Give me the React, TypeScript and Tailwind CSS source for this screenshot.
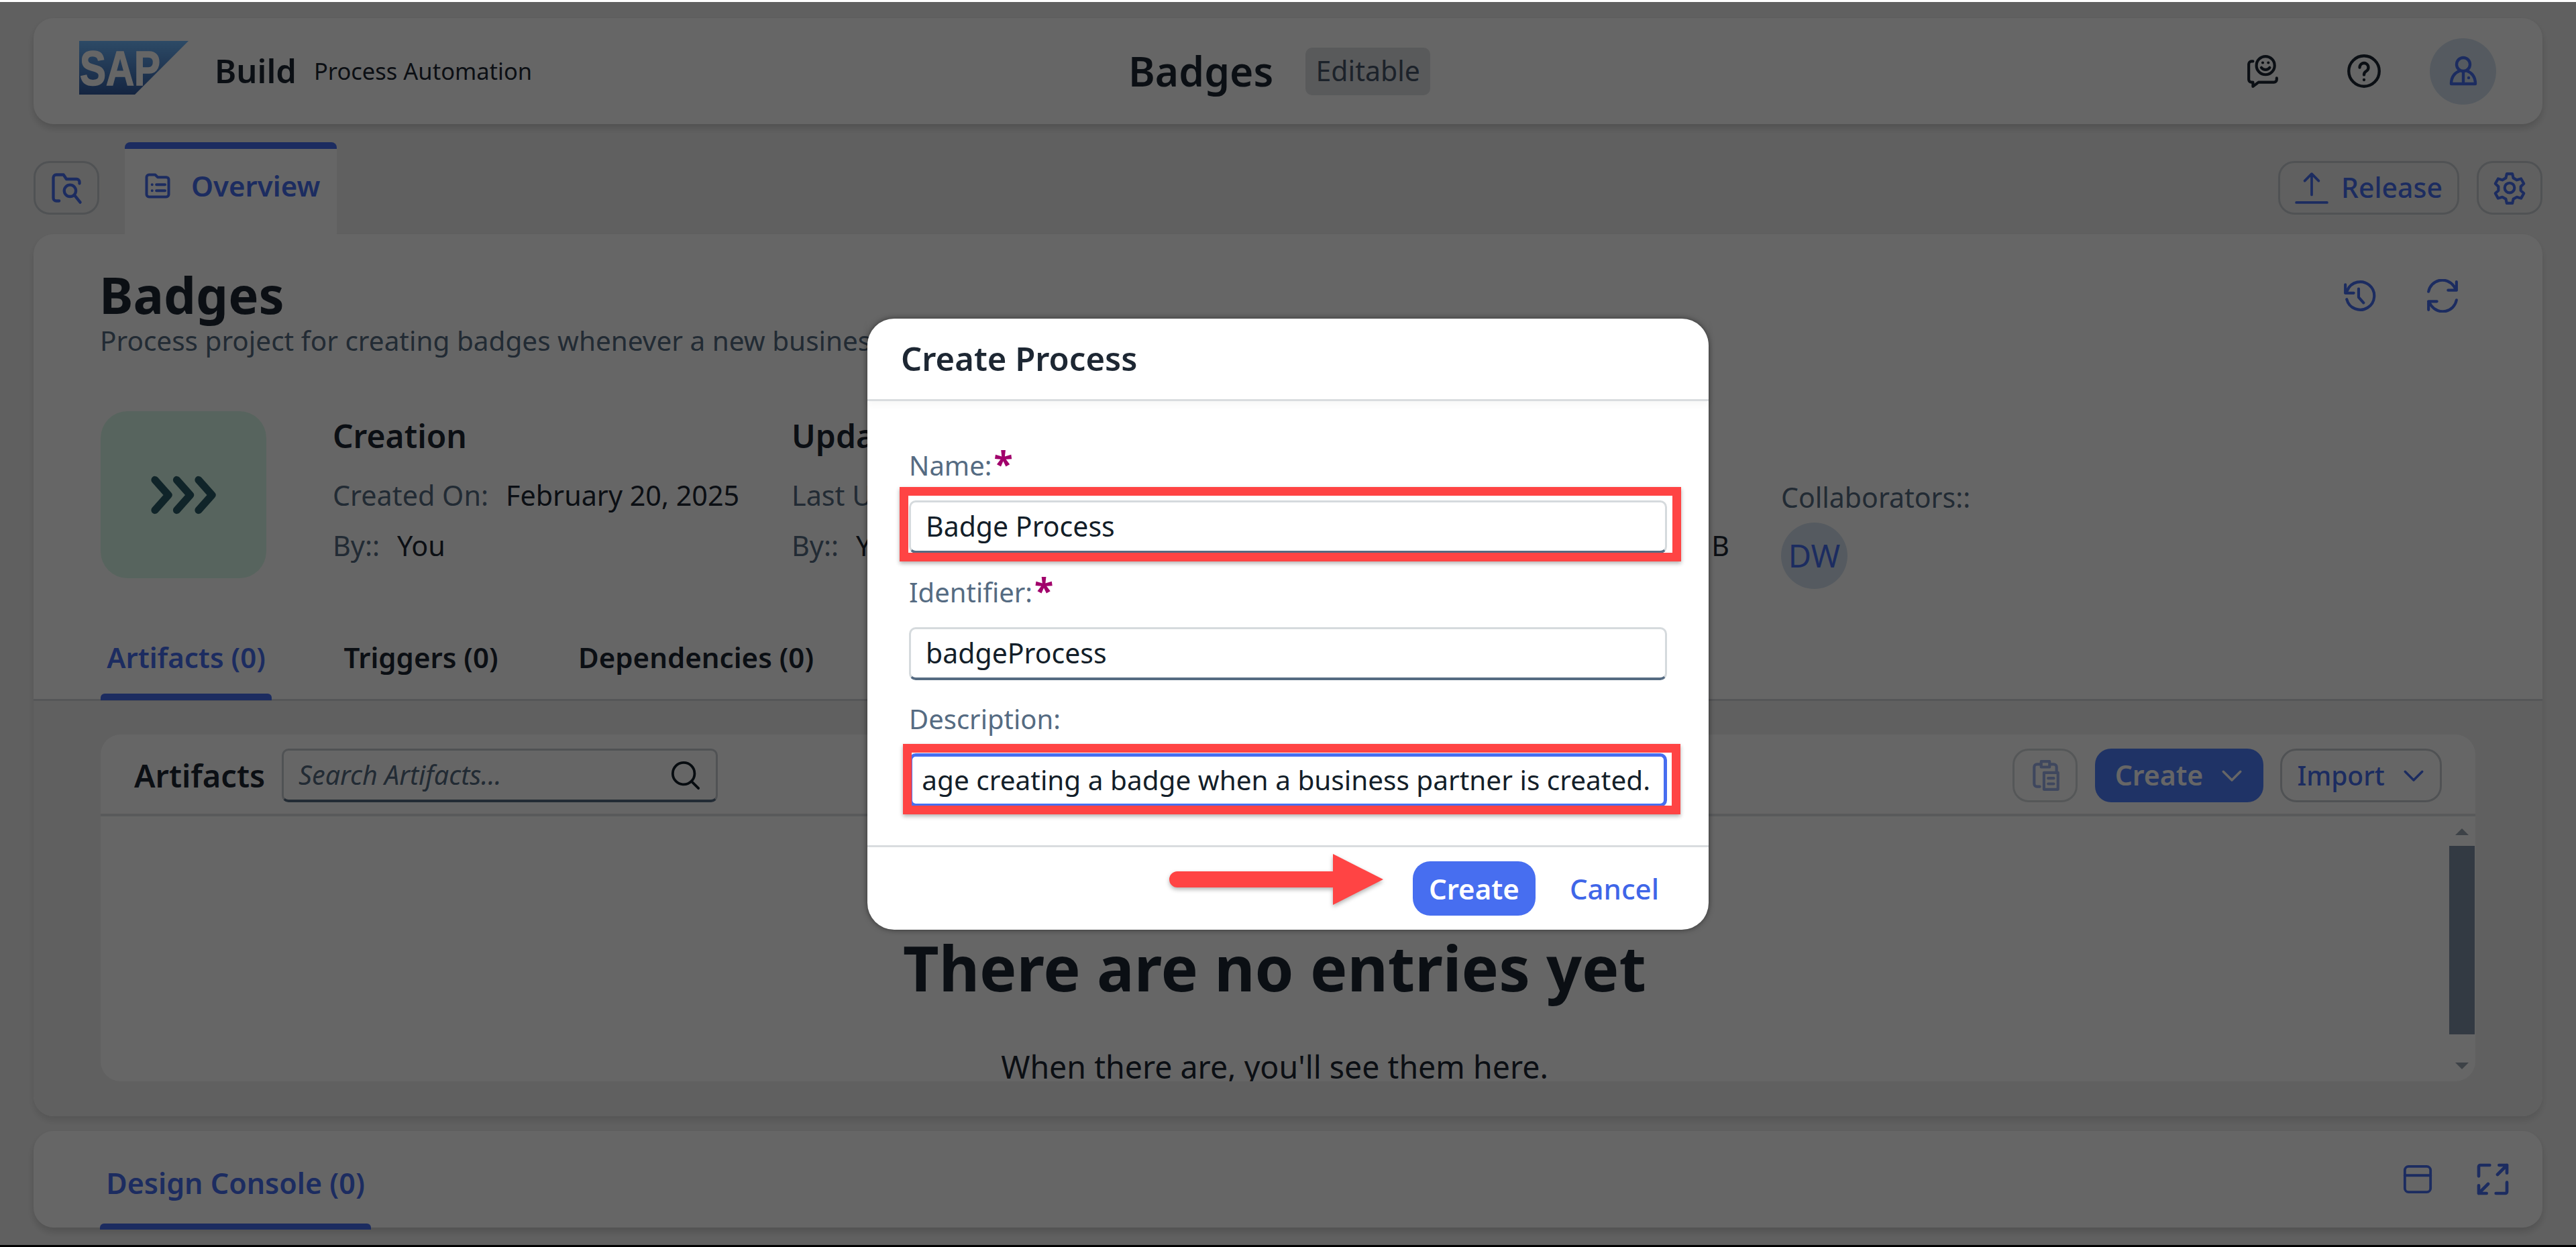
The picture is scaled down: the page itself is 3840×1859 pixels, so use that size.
import React from "react";

const Svg = ({ className, children, sw = 2, vb = "0 0 24 24" }: { className: string; children: React.ReactNode; sw?: number; vb?: string }) => (
  <svg viewBox={vb} fill="none" stroke="currentColor" strokeWidth={sw} strokeLinecap="round" strokeLinejoin="round" className={className}>
    {children}
  </svg>
);

const SapLogo = () => (
  <svg viewBox="0 0 163 80" className="w-[163px] h-[80px]">
    <defs>
      <linearGradient id="sapg" x1="0" y1="0" x2="0" y2="1">
        <stop offset="0" stopColor="#70b9ff" />
        <stop offset="1" stopColor="#345ca2" />
      </linearGradient>
    </defs>
    <polygon points="0,0 163,0 83,80 0,80" fill="url(#sapg)" />
    <text x="1" y="66" fontFamily="'Liberation Sans',sans-serif" fontWeight="700" fontSize="72" fill="#fff" stroke="#fff" strokeWidth="1.5" textLength="120" lengthAdjust="spacingAndGlyphs">SAP</text>
  </svg>
);

const Outline = ({ className, children }: { className: string; children: React.ReactNode }) => (
  <div className={`flex items-center justify-center rounded-[24px] border-[3px] border-[#c8cdd2] ${className}`}>{children}</div>
);

const Field = ({ label, req, children, mb }: { label: string; req?: boolean; children: React.ReactNode; mb: string }) => (
  <div className="flex flex-col">
    <div className={`flex h-[52px] items-center text-[40px] text-[#556b82] ${mb}`}>
      {label}
      {req && <span className="ml-[3px] -mt-[6px] text-[52px] font-bold leading-none text-[#a1006b]">*</span>}
    </div>
    {children}
  </div>
);

const inputCls = "relative flex h-[79px] w-[1130px] items-center rounded-[10px] border-[3px] border-b-[4px] border-[#d5dadd] border-b-[#556b82] bg-white pl-[22px] text-[41px] text-[#131e29]";

const RedBox = ({ className }: { className: string }) => (
  <div className={`absolute border-[13px] border-[#ff4444] shadow-[0_3px_6px_rgba(0,0,0,0.3)] ${className}`} />
);

const MetaRow = ({ label, value, className }: { label: string; value: string; className: string }) => (
  <div className={`flex h-[50px] items-center text-[41.300px] ${className}`}>
    <span className="text-[#556b82]">{label}</span>
    <span className="ml-[26px] text-[#1d2733]">{value}</span>
  </div>
);

export default function App() {
  return (
    <div className="flex h-[1859px] w-full flex-col overflow-hidden bg-white font-['Noto_Sans',sans-serif]">
      <div className="h-[3px] shrink-0 bg-white" />
      <div className="relative min-h-0 flex-1 bg-[#f1f1f1] px-[50px] pt-[24px] text-[#1d2733]">
        {/* Shell bar */}
        <header className="flex h-[158px] items-center rounded-[30px] bg-white pl-[68px] pr-[69px] shadow-[0_6px_12px_rgba(0,0,0,0.16)]">
          <div className="flex w-[1564px] items-center">
            <div className="-mt-[10px]"><SapLogo /></div>
            <span className="ml-[39px] text-[49px] font-semibold">Build</span>
            <span className="ml-[26px] text-[34.500px]">Process Automation</span>
          </div>
          <span className="text-[60.500px] font-semibold">Badges</span>
          <span className="ml-[48px] flex h-[71px] w-[186px] items-center justify-center rounded-[10px] bg-[#dfe1e3] text-[41px] text-[#475569]">Editable</span>
          <div className="flex-1" />
          <Svg className="h-[50px] w-[50px]" sw={2}>
            <path d="M5 5H4a2 2 0 0 0-2 2v11a2 2 0 0 0 2 2h1v3l4-3h11a2 2 0 0 0 2-2v-1" />
            <circle cx="14" cy="8" r="6.5" />
            <path d="M11 9.500c1.500 2 4.500 2 6 0M12 6h.01M16 6h.01" />
          </Svg>
          <Svg className="ml-[100px] h-[52px] w-[52px]" sw={2}>
            <circle cx="12" cy="12" r="10.500" />
            <path d="M9 9.500a3 3 0 1 1 4.500 2.600c-1 .6-1.500 1.200-1.500 2.400M12 18h.01" />
          </Svg>
          <div className="ml-[72px] flex h-[99px] w-[99px] items-center justify-center rounded-full bg-[#d4e2f0] text-[#476ef0]">
            <Svg className="h-[48px] w-[48px]" sw={2.2}>
              <circle cx="12" cy="7" r="5" />
              <path d="M9 12c-3 1-6 4-6 9.500h18c0-5.500-3-8.500-6-9.500M12 13v8.500M16 17h.01" />
            </Svg>
          </div>
        </header>

        {/* Toolbar row */}
        <div className="flex h-[164px] items-start pt-[27px]">
          <Outline className="mt-[28px] h-[80px] w-[98px] text-[#476ef0]">
            <Svg className="h-[52px] w-[56px]" sw={2}>
              <path d="M7 21H5a2 2 0 0 1-2-2V5a2 2 0 0 1 2-2h5l2 3h7a2 2 0 0 1 2 2v1" />
              <circle cx="14.500" cy="14" r="4" />
              <path d="M17.500 17l4 5" />
            </Svg>
          </Outline>
          <div className="ml-[38px] flex h-[137px] w-[316px] items-center rounded-t-[8px] border-t-[10px] border-[#476ef0] bg-white pb-[18px] pl-[25px] text-[#476ef0]">
            <Svg className="h-[44px] w-[48px]" sw={2.2}>
              <path d="M3 5a2 2 0 0 1 2-2h5l2 2h7a2 2 0 0 1 2 2v12a2 2 0 0 1-2 2H5a2 2 0 0 1-2-2zM7.500 11h.01M7.500 16h.01M11 11h7M11 16h7" />
            </Svg>
            <span className="ml-[26px] text-[42px] font-semibold">Overview</span>
          </div>
          <div className="flex-1" />
          <Outline className="mt-[28px] h-[80px] w-[270px] gap-[19px] text-[#476ef0]">
            <Svg className="h-[52px] w-[50px]" sw={1.8}>
              <path d="M12 17V2M7 7l5-5 5 5M1 22.500h22" />
            </Svg>
            <span className="text-[41px] font-medium">Release</span>
          </Outline>
          <Outline className="ml-[26px] mt-[28px] h-[80px] w-[98px] text-[#476ef0]">
            <Svg className="h-[50px] w-[50px]" sw={2}>
              <circle cx="12" cy="12" r="3.500" />
              <path d="M10 2h4l.7 3 2.500 1.400 3-.9 2 3.500-2.200 2.100v2.800l2.200 2.100-2 3.500-3-.9-2.500 1.400-.7 3h-4l-.7-3-2.500-1.400-3 .9-2-3.500 2.200-2.100v-2.800L1.800 9l2-3.500 3 .9L9.300 5z" />
            </Svg>
          </Outline>
        </div>

        {/* Project card */}
        <section className="flex h-[1315px] flex-col overflow-hidden rounded-[30px] bg-white shadow-[0_6px_12px_rgba(0,0,0,0.12)]">
          <div className="flex h-[696px] shrink-0 flex-col border-b-[3px] border-[#d5d8db] px-[100px] pt-[43px]">
            <div className="flex h-[142px] items-start">
              <div className="flex-1">
                <h1 className="-ml-[2px] text-[76px] font-bold leading-[94px]">Badges</h1>
                <p className="-ml-[1px] -mt-[3px] text-[40.500px] leading-[50px] text-[#556b82]">Process project for creating badges whenever a new business partner is created.</p>
              </div>
              <Svg className="mr-[74px] mt-[24px] h-[50px] w-[50px] text-[#476ef0]" sw={2}>
                <path d="M2 4v6h6M3 14.500A10 10 0 1 0 3.500 8L2 10M11.500 7v6l3.500 4" />
              </Svg>
              <Svg className="mr-[24px] mt-[24px] h-[50px] w-[50px] text-[#476ef0]" sw={2}>
                <path d="M2 9a10 10 0 0 1 18-4l2 3M22 2v6h-6M22 15a10 10 0 0 1-18 4l-2-3M2 22v-6h6" />
              </Svg>
            </div>
            <div className="mt-[79px] flex items-start">
              <div className="flex h-[249px] w-[247px] items-center justify-center rounded-[40px] bg-[#dafbea] text-[#2a5a66]">
                <Svg className="h-[60px] w-[105px]" sw={4.500} vb="0 0 42 24">
                  <path d="M4 3l8 9-8 9M17 3l8 9-8 9M30 3l8 9-8 9" />
                </Svg>
              </div>
              <div className="ml-[99px] w-[684px]">
                <h3 className="mt-[9px] text-[48px] font-semibold leading-[56px]">Creation</h3>
                <MetaRow className="mt-[36px]" label="Created On:" value="February 20, 2025" />
                <MetaRow className="mt-[25px]" label="By::" value="You" />
              </div>
              <div className="w-[720px]">
                <h3 className="mt-[9px] text-[48px] font-semibold leading-[56px]">Update</h3>
                <MetaRow className="mt-[36px]" label="Last Updated On:" value="February 20, 2025" />
                <MetaRow className="mt-[25px]" label="By::" value="You" />
              </div>
              <div className="w-[755px]">
                <h3 className="mt-[9px] text-[48px] font-semibold leading-[56px]">Details</h3>
                <div className="mt-[111px] flex h-[50px] items-center justify-end pr-[77px] text-[41px]">0 B</div>
              </div>
              <div>
                <div className="mt-[104px] flex h-[50px] items-center text-[41px] text-[#556b82]">Collaborators::</div>
                <div className="mt-[12px] flex h-[99px] w-[99px] items-center justify-center rounded-full bg-[#d4e2f0] text-[47px] text-[#476ef0]">DW</div>
              </div>
            </div>
            <nav className="mt-auto flex h-[94px] gap-[100px] text-[42px] font-semibold">
              <span className="relative flex w-[255px] justify-center text-[#476ef0]">Artifacts (0)<i className="absolute bottom-[-2px] left-0 h-[10px] w-full rounded-t-[6px] bg-[#476ef0]" /></span>
              <span className="flex w-[245px] justify-center">Triggers (0)</span>
              <span className="flex w-[375px] justify-center">Dependencies (0)</span>
            </nav>
          </div>
          <div className="min-h-0 flex-1 bg-[#f1f1f1] px-[100px] pt-[50px]">
            <div className="flex h-[517px] flex-col overflow-hidden rounded-[30px] bg-white">
              <div className="flex h-[122px] shrink-0 items-center border-b-[4px] border-[#dfe1e3] pl-[50px] pr-[50px] pt-[4px]">
                <span className="w-[220px] text-[47px] font-semibold">Artifacts</span>
                <div className="flex h-[80px] w-[650px] items-center justify-between rounded-[10px] border-[3px] border-b-[4px] border-[#c8cdd2] border-b-[#556b82] pl-[22px] pr-[22px] text-[39.500px] italic text-[#556b82]">
                  Search Artifacts...
                  <Svg className="h-[46px] w-[46px] text-[#131e29]" sw={2}>
                    <circle cx="10.500" cy="10.500" r="8.500" />
                    <path d="M17 17l5 5" />
                  </Svg>
                </div>
                <div className="flex-1" />
                <Outline className="h-[80px] w-[97px] border-[#d5dadd] text-[#9db2ea]">
                  <Svg className="h-[50px] w-[50px]" sw={2}>
                    <path d="M8 20H6a2 2 0 0 1-2-2V6a2 2 0 0 1 2-2h2M16 4h2a2 2 0 0 1 2 2v3M9 2h6v4H9zM11 10h10v12H11zM14 14h4M14 18h4" />
                  </Svg>
                </Outline>
                <div className="ml-[26px] flex h-[80px] w-[251px] items-center justify-center gap-[26px] rounded-[24px] bg-[#4f7fff] text-[41px] font-semibold text-white">
                  Create
                  <Svg className="h-[34px] w-[34px]" sw={2.500}><path d="M3 8l9 9 9-9" /></Svg>
                </div>
                <Outline className="ml-[25px] h-[80px] w-[241px] gap-[26px] border-[#c8cdd2] text-[#476ef0]">
                  <span className="text-[39px] font-medium">Import</span>
                  <Svg className="h-[34px] w-[34px]" sw={2.500}><path d="M3 8l9 9 9-9" /></Svg>
                </Outline>
              </div>
              <div className="relative flex min-h-0 flex-1 flex-col items-center pr-[40px]">
                <h2 className="mt-[160px] whitespace-nowrap text-[93px] font-bold leading-[130px]">There are no entries yet</h2>
                <p className="mt-[53px] whitespace-nowrap text-[46.500px] leading-[60px]">When there are, you'll see them here.</p>
                <div className="absolute bottom-0 right-0 top-0 flex w-[40px] flex-col items-center pt-[18px]">
                  <div className="h-0 w-0 border-x-[10px] border-b-[10px] border-x-transparent border-b-[#9aa5b2]" />
                  <div className="mt-[16px] h-[281px] w-[38px] bg-[#7f92a8]" />
                  <div className="mt-[42px] h-0 w-0 border-x-[10px] border-t-[10px] border-x-transparent border-t-[#9aa5b2]" />
                </div>
              </div>
            </div>
          </div>
        </section>

        {/* Design console */}
        <section className="mt-[22px] flex h-[144px] items-center rounded-[30px] bg-white pl-[99px] pr-[46px] shadow-[0_6px_12px_rgba(0,0,0,0.16)]">
          <span className="relative mt-[14px] flex h-[130px] w-[404px] justify-center pt-[32px] text-[43px] font-semibold text-[#476ef0]">
            Design Console (0)
            <i className="absolute bottom-[-3px] left-0 h-[9px] w-full rounded-t-[6px] bg-[#476ef0]" />
          </span>
          <div className="flex-1" />
          <Svg className="h-[46px] w-[46px] text-[#476ef0]" sw={2}>
            <rect x="2" y="2" width="20" height="20" rx="3" />
            <path d="M2 9h20" />
          </Svg>
          <Svg className="ml-[61px] h-[56px] w-[56px] text-[#476ef0]" sw={2}>
            <path d="M10 3H4a1 1 0 0 0-1 1v6M14 21h6a1 1 0 0 0 1-1v-6M15 9l6-6M16 3h5v5M9 15l-6 6M3 16v5h5" />
          </Svg>
        </section>

        {/* Dim layer */}
        <div className="absolute inset-0 bg-black/60" />

        {/* Dialog */}
        <div className="absolute left-[1293px] top-[472px] flex h-[911px] w-[1254px] flex-col rounded-[40px] bg-white shadow-[0_0_8px_rgba(0,0,0,0.5)]">
          <div className="flex h-[123px] shrink-0 items-center border-b-[3px] border-[#d9dcdf] pl-[50px] text-[49px] font-semibold text-[#1d2733] shadow-[0_6px_10px_rgba(0,0,0,0.03)]">
            Create Process
          </div>
          <div className="flex flex-1 flex-col gap-[32px] pl-[62px] pt-[70px] text-[#131e29]">
            <Field label="Name:" req mb="mb-[26px]">
              <div className={inputCls}>
                Badge Process
                <RedBox className="-left-[17px] -right-[24px] -top-[23px] -bottom-[16px]" />
              </div>
            </Field>
            <Field label="Identifier:" req mb="mb-[26px]">
              <div className={inputCls}>badgeProcess</div>
            </Field>
            <Field label="Description:" mb="mb-[25px]">
              <div className="relative flex h-[80px] w-[1130px] items-center justify-end rounded-[10px] border-[5px] border-[#476ef0] bg-white pr-[20px]">
                <div className="whitespace-nowrap text-[40.500px] text-[#131e29]">
                  age creating a badge when a business partner is created.
                </div>
                <RedBox className="-left-[14px] -right-[25px] -top-[19px] -bottom-[16px]" />
              </div>
            </Field>
          </div>
          <div className="flex h-[126px] shrink-0 items-center justify-end border-t-[3px] border-[#d9dcdf] pr-[74px]">
            <div className="flex h-[81px] w-[183px] items-center justify-center rounded-[26px] bg-[#476ef0] text-[42px] font-semibold text-white">Create</div>
            <span className="ml-[51px] text-[42px] font-medium text-[#3f66e8]">Cancel</span>
          </div>
          <svg viewBox="0 0 319 76" className="absolute left-[450px] top-[798px] h-[76px] w-[319px] drop-shadow-[0_3px_3px_rgba(0,0,0,0.3)]">
            <path d="M12 26H244V0L319 38L244 76V50H12a12 12 0 0 1 0-24z" fill="#ff4444" />
          </svg>
        </div>
      </div>
      <div className="h-[3px] shrink-0 bg-black" />
    </div>
  );
}
